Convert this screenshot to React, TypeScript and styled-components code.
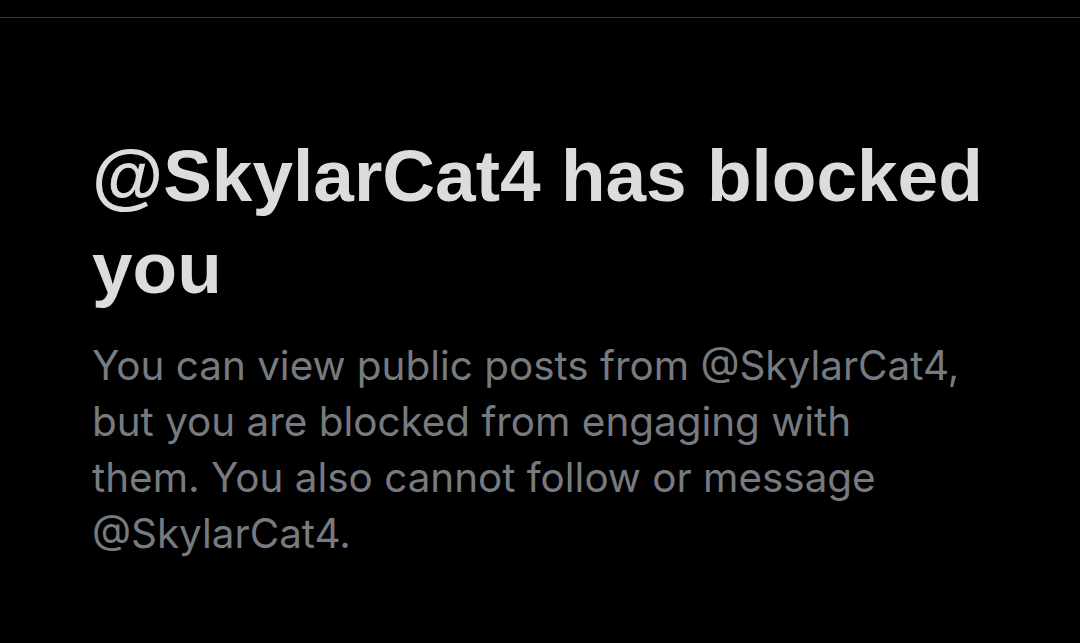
import React from "react";
import styled, { createGlobalStyle } from "styled-components";

const GlobalStyle = createGlobalStyle`
  html, body {
    margin: 0;
    padding: 0;
    background: #000;
  }
  body {
    width: 1080px;
    height: 643px;
    overflow: hidden;
  }
`;

const Page = styled.main`
  width: 1080px;
  height: 643px;
  background: #000;
  display: flex;
  flex-direction: column;
`;

const Divider = styled.div`
  margin-top: 17px;
  height: 1px;
  background: #38393b;
`;

const Content = styled.section`
  padding: 112px 0 0 92px;
  width: 900px;
  display: flex;
  flex-direction: column;
  gap: 24px;
`;

const Title = styled.h1`
  margin: 0;
  font-family: "Liberation Sans", Arial, sans-serif;
  font-weight: 700;
  font-size: 73px;
  line-height: 92px;
  color: #dcdcdc;
  -webkit-font-smoothing: antialiased;
`;

const Body = styled.p`
  margin: 0;
  max-width: 871px;
  font-family: Inter, "Noto Sans", sans-serif;
  font-weight: 400;
  font-size: 40.4px;
  line-height: 56px;
  color: #777b80;
  -webkit-font-smoothing: antialiased;
`;

export default function App() {
  const handle = "@SkylarCat4";

  return (
    <>
      <GlobalStyle />
      <Page>
        <Divider />
        <Content>
          <Title>{handle} has blocked you</Title>
          <Body>
            You can view public posts from {handle}, but you are blocked from
            engaging with them. You also cannot follow or message {handle}.
          </Body>
        </Content>
      </Page>
    </>
  );
}
